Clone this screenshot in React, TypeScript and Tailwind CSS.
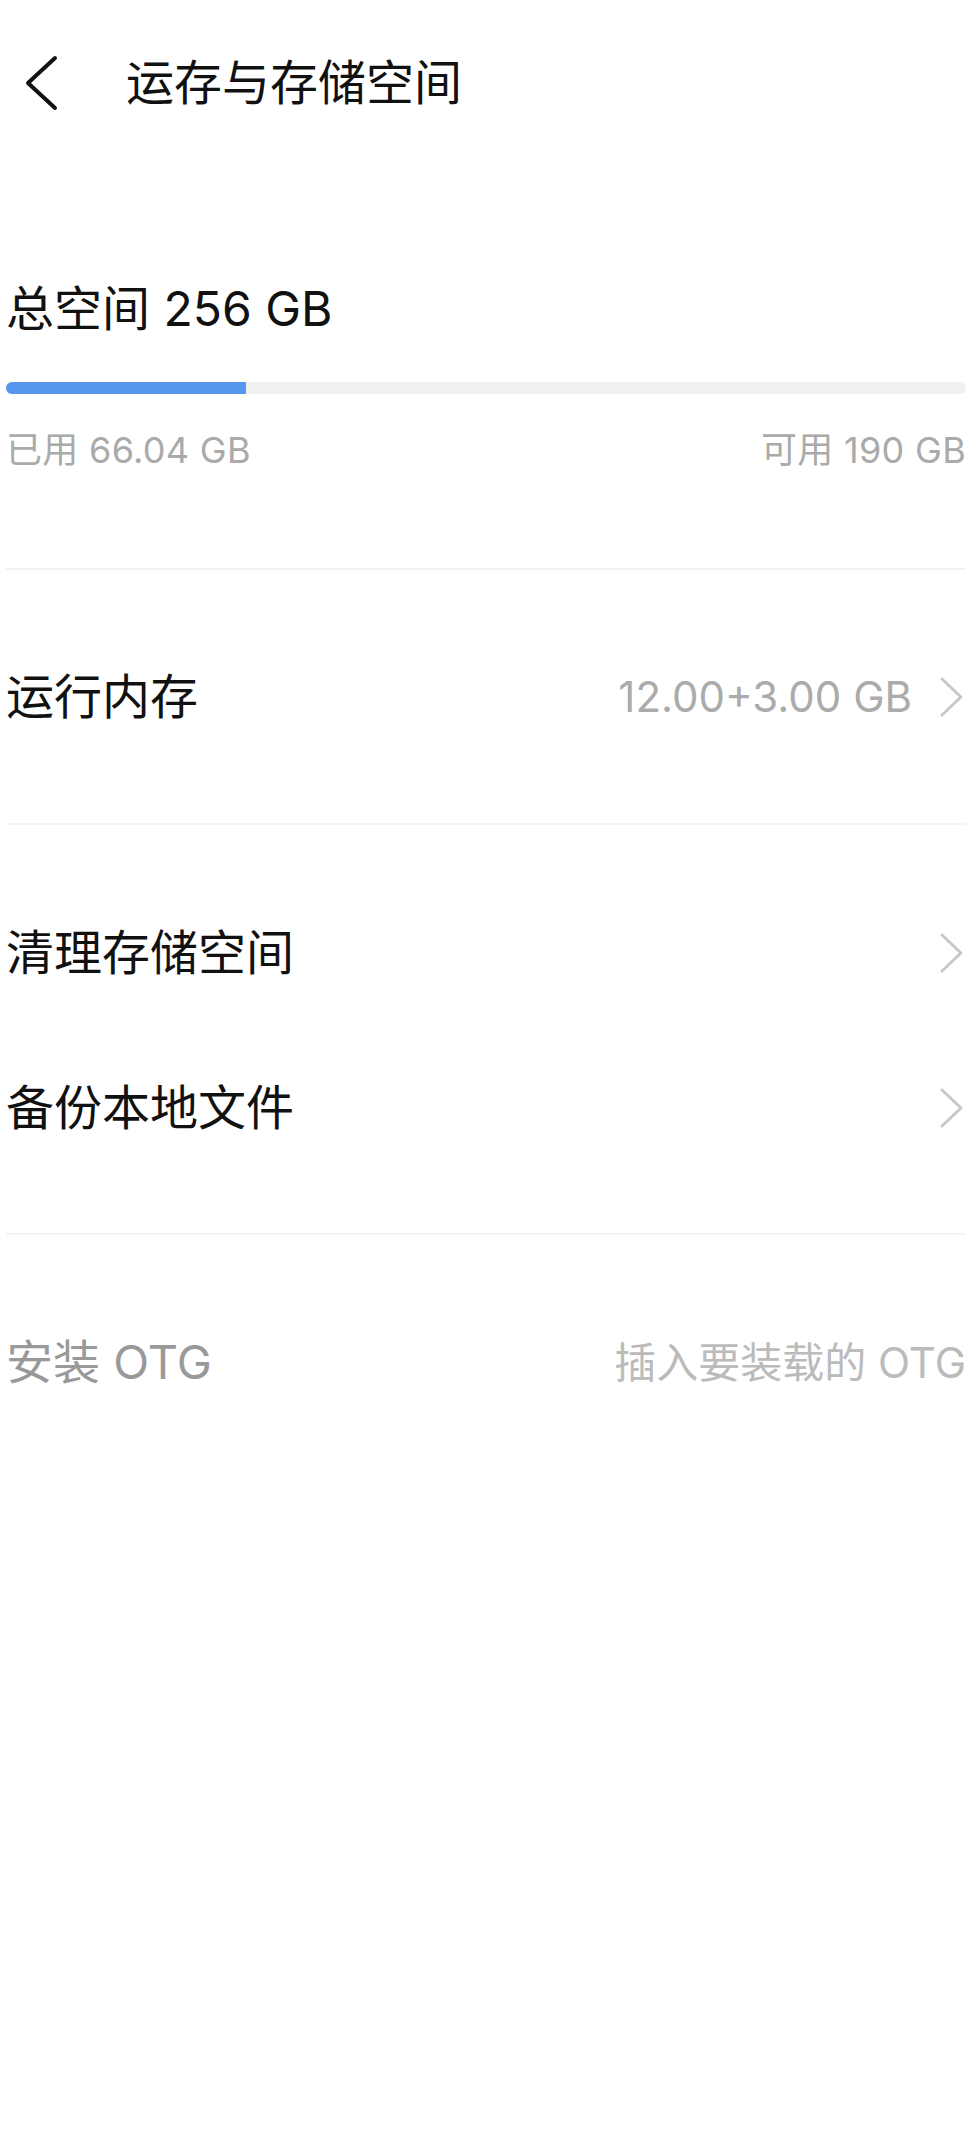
const ArrowRight = () => (
  <svg width="24" height="40" viewBox="0 0 24 40" fill="none" stroke="#c8c8c8" strokeWidth="3" strokeLinecap="round" strokeLinejoin="round">
    <polyline points="2,2 21,20 2,38" />
  </svg>
);

const BackArrow = () => (
  <svg width="36" height="56" viewBox="0 0 36 56" fill="none" stroke="#111" strokeWidth="4" strokeLinecap="round" strokeLinejoin="round">
    <polyline points="31,3 4,28 31,53" />
  </svg>
);

const Divider = () => <div className="h-[2px] bg-[#f3f3f3]" />;

const rows = [
  { name: '清理存储空间' },
  { name: '备份本地文件' }
];

export default function App() {
  return (
    <div className="min-h-[2140px] w-full bg-white font-[Inter,'Noto_Sans_CJK_SC',sans-serif] text-[#111]">
      <header className="flex h-[166px] items-center">
        <div className="ml-[24px] flex w-[36px]">
          <BackArrow />
        </div>
        <h1 className="ml-[66px] text-[48px] leading-none font-normal">运存与存储空间</h1>
      </header>

      <div className="px-[6px]">
        <div className="pt-[114px] text-[48px] leading-[58px]">总空间 256 GB</div>
        <div className="mt-[44px] h-[12px] overflow-hidden rounded-full bg-[#f0f0f0]">
          <div className="h-full w-[240px] bg-[#5597ee]" />
        </div>
        <div className="mt-[36px] flex h-[40px] items-center justify-between text-[36px] tracking-[0.3px] text-[#aaaaaa]">
          <span>已用 66.04 GB</span>
          <span>可用 190 GB</span>
        </div>
        <div className="mt-[98px]">
          <Divider />
        </div>

        <div className="flex h-[253px] items-center justify-between">
          <span className="text-[48px]">运行内存</span>
          <div className="flex items-center gap-[28px] pr-[2px]">
            <span className="text-[42px] text-[#ababab]">12.00+3.00 GB</span>
            <ArrowRight />
          </div>
        </div>
        <Divider />

        <div className="pt-[50px] pb-[48px]">
          {rows.map((r) => (
            <div key={r.name} className="flex h-[155px] items-center justify-between">
              <span className="text-[48px]">{r.name}</span>
              <div className="pr-[2px]">
                <ArrowRight />
              </div>
            </div>
          ))}
        </div>
        <Divider />

        <div className="flex h-[254px] items-center justify-between">
          <span className="text-[47px] text-[#999999]">安装 OTG</span>
          <span className="text-[42px] text-[#bbbbbb]">插入要装载的 OTG</span>
        </div>
      </div>
    </div>
  );
}
